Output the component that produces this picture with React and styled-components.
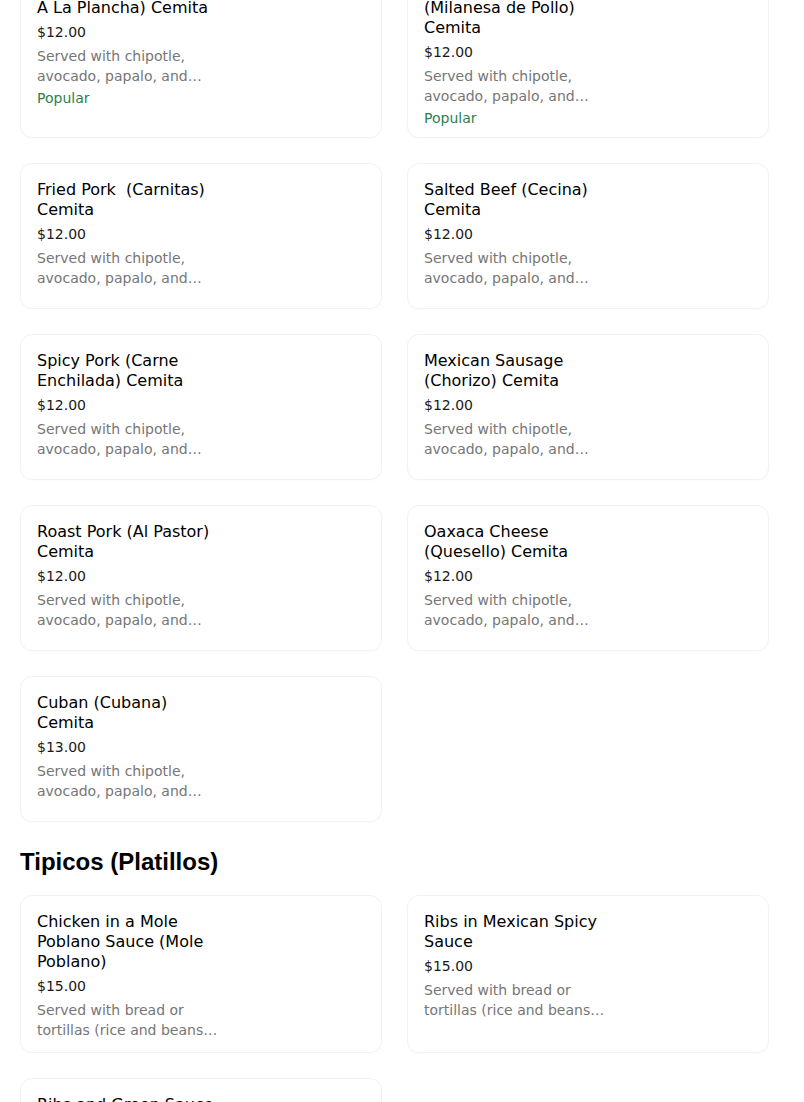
import React from "react";
import styled, { createGlobalStyle } from "styled-components";

const GlobalStyle = createGlobalStyle`
  html, body {
    margin: 0;
    padding: 0;
    background: #ffffff;
  }
  body {
    font-family: "DejaVu Sans", "Noto Sans", sans-serif;
    color: #191919;
  }
`;

// the page is shown scrolled a little past the top of the cemitas list
const Page = styled.div`
  width: 789px;
  height: 1102px;
  overflow: hidden;
  box-sizing: border-box;
  padding: 0 20px;
`;

const Scroller = styled.div`
  margin-top: -39px;
`;

const Section = styled.section`
  display: flex;
  flex-direction: column;
`;

const SectionTitle = styled.h2`
  margin: 26px 0 19px;
  font-family: "Liberation Sans", Arial, sans-serif;
  font-size: 24px;
  font-weight: 700;
  line-height: 28px;
  color: #000000;
`;

const Grid = styled.div`
  display: grid;
  grid-template-columns: 1fr 1fr;
  gap: 25px;
`;

const Card = styled.div`
  box-sizing: border-box;
  min-height: 146px;
  padding: 16px 16px 12px;
  border: 1px solid #f2f2f2;
  border-radius: 12px;
  background: #ffffff;
  box-shadow: 0 1px 2px rgba(0, 0, 0, 0.02);
`;

const Info = styled.div`
  max-width: 184px;
  display: flex;
  flex-direction: column;
`;

const Name = styled.div`
  font-size: 16px;
  line-height: 20px;
  color: #000000;
  margin-bottom: 4px;
`;

const Price = styled.div`
  font-size: 14px;
  line-height: 20px;
  color: #191919;
`;

const Desc = styled.div`
  margin-top: 4px;
  font-size: 14px;
  line-height: 20px;
  color: #767676;
  display: -webkit-box;
  -webkit-line-clamp: 2;
  -webkit-box-orient: vertical;
  overflow: hidden;
`;

const Badge = styled.div`
  margin-top: 5px;
  font-size: 14px;
  line-height: 14px;
  color: #2a8150;
`;

const CEMITA_DESC =
  "Served with chipotle, avocado, papalo, and quesillo on a sesame seed bun.";
const TIPICO_DESC =
  "Served with bread or tortillas (rice and beans on the side).";

const cemitas = [
  { id: 1, name: "Grilled Chicken (Pollo A La Plancha) Cemita", price: "$12.00", popular: true },
  { id: 2, name: "Breaded Chicken (Milanesa de Pollo) Cemita", price: "$12.00", popular: true },
  { id: 3, name: "Fried Pork\u00a0 (Carnitas) Cemita", price: "$12.00" },
  { id: 4, name: "Salted Beef (Cecina) Cemita", price: "$12.00" },
  { id: 5, name: "Spicy Pork (Carne Enchilada) Cemita", price: "$12.00" },
  { id: 6, name: "Mexican Sausage (Chorizo) Cemita", price: "$12.00" },
  { id: 7, name: "Roast Pork (Al Pastor) Cemita", price: "$12.00" },
  { id: 8, name: "Oaxaca Cheese (Quesello) Cemita", price: "$12.00" },
  { id: 9, name: "Cuban (Cubana) Cemita", price: "$13.00" },
];

const tipicos = [
  { id: 10, name: "Chicken in a Mole Poblano Sauce (Mole Poblano)", price: "$15.00" },
  { id: 11, name: "Ribs in Mexican Spicy Sauce", price: "$15.00" },
  { id: 12, name: "Ribs and Green Sauce (Costillas en Salsa Verde)", price: "$15.00" },
];

function MenuCard({ name, price, desc, popular }) {
  return (
    <Card>
      <Info>
        <Name>{name}</Name>
        <Price>{price}</Price>
        <Desc>{desc}</Desc>
        {popular && <Badge>Popular</Badge>}
      </Info>
    </Card>
  );
}

export default function App() {
  return (
    <>
      <GlobalStyle />
      <Page>
        <Scroller>
          <Section>
            <Grid>
              {cemitas.map((item) => (
                <MenuCard key={item.id} {...item} desc={CEMITA_DESC} />
              ))}
            </Grid>
          </Section>
          <Section>
            <SectionTitle>Tipicos (Platillos)</SectionTitle>
            <Grid>
              {tipicos.map((item) => (
                <MenuCard key={item.id} {...item} desc={TIPICO_DESC} />
              ))}
            </Grid>
          </Section>
        </Scroller>
      </Page>
    </>
  );
}
